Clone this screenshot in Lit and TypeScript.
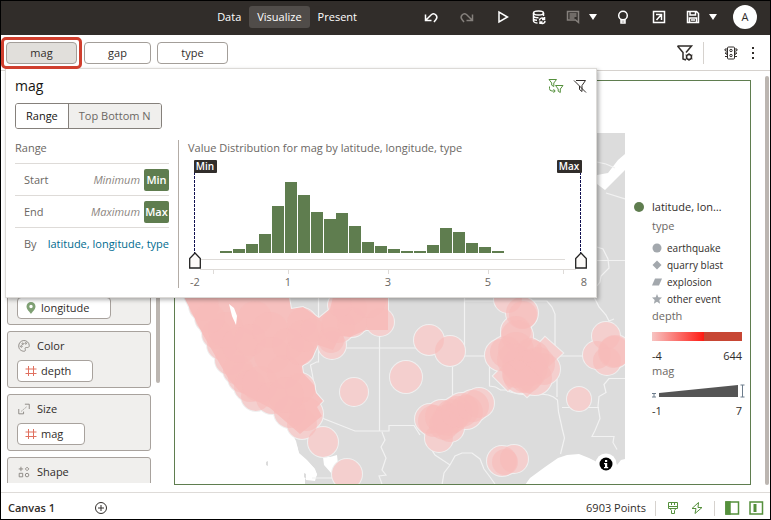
import { LitElement, html, css, svg } from "lit";
import { customElement, state } from "lit/decorators.js";

const icons = {
  undo: svg`<path d="M2.500 5.500v6h6M3 11 8.500 5.500a3.400 3.400 0 0 1 4.500 5l-2 2.500" />`,
  redo: svg`<path d="M13.500 5.500v6h-6M13 11 7.500 5.500a3.400 3.400 0 0 0-4.500 5L5 13" />`,
  play: svg`<path d="M4 3v10l8.500-5z" />`,
  db: svg`<ellipse cx="7.500" cy="4" rx="5" ry="2" /><path d="M2.500 4v8c0 1 2 2 4 2M12.500 4v3M2.500 6.800c0 1.500 3 2 5 2M2.500 9.800c0 1 2 1.500 3.500 1.500M8.500 11.500a2.500 2.500 0 0 1 4.500-1.500M13.500 8v2.500H11M14 12a2.500 2.500 0 0 1-4.500 1.500M9 15v-2h2.500" />`,
  note: svg`<path d="M2.500 2.500h11v11l-3-2.500h-8zM4.500 5h7M4.500 7h7M4.500 9h5" />`,
  bulb: svg`<circle cx="8" cy="6.500" r="4.300" /><path d="M6 10v4h4v-4M6 12h4" />`,
  exp: svg`<path d="M2.500 2.500h11v11h-11zM5 5.500h5.500V11M10.500 5.500l-5 5.500" />`,
  save: svg`<path d="M2.500 2.500h9l2 2v9h-11zM5 2.500V6h5.500V2.500M4.500 13.500V9h7v4.500M6 11h4" />`,
  light: svg`<rect x="4.500" y="2" width="7" height="12" rx="1" /><circle cx="8" cy="5.500" r="1.200" /><circle cx="8" cy="10.500" r="1.200" /><path d="M4.500 4H2v1.500l2.500 1M4.500 8H2l2.500 2M4.500 11.500H2M11.500 4H14v1.500l-2.500 1M11.500 8H14l-2.500 2M11.500 11.500H14" />`,
  swap: svg`<path d="M1 1.500h7.500L5.800 5v3.500L3.700 7.200V5zM7.500 7.500H15L12.300 11v3.500l-2.100-1.300V11zM1.500 8.500v2a2.500 2.500 0 0 0 2.500 2.500h3M5.500 11.200 7.200 13l-1.700 1.800" />`,
  nofilter: svg`<path d="M4 2.500h9.500L10 7.500v6l-2.500-2v-3.500M2 2.500l12 12" />`,
  palette: svg`<path d="M7.500 14c-2-.3-5.500-1.500-5.500-6a6 6 0 0 1 12-.5c0 2-1.500 2.500-3 2.200-2-.2-2 1-1.500 2.300S9 14.200 7.500 14z" /><circle cx="5" cy="8.500" r=".9" /><circle cx="6.500" cy="5.500" r=".9" /><circle cx="10" cy="5" r=".9" />`,
  size: svg`<path d="M9 2.500h5V8M2 8v5.500h5.500V11" /><path d="M5 10.500l6-5" stroke-dasharray="1.500 1.500" />`,
  shapes: svg`<path d="M4.500 2v5M2 4.500h5M11.500 2.500l2 2-2 2-2-2zM2.500 9.500h4v4h-4z" /><circle cx="11.500" cy="11.500" r="2" />`,
  brush: svg`<path d="M3.500 2.500h9v6h-9zM3.500 6.500h9M6.500 2.500v2.500M9.500 2.500v2.500M5 8.500l1.500 2v3h3v-3l1.500-2" />`,
  bolt: svg`<path d="M9.500 2.500 3 8.500h4L6 13.500l7-6H9z" />`,
  paneA: svg`<path d="M2 2h12.500v12H2z" /><path d="M2 2h4v12H2z" fill="currentColor" />`,
  paneB: svg`<path d="M2 2h12.500v12H2z" /><path d="M5.500 4h3v8h-3z" fill="currentColor" stroke="none" />`,
  plus: svg`<circle cx="8" cy="8" r="5.500" /><path d="M8 5v6M5 8h6" />`,
  hash: svg`<path d="M5.500 3v10M10.500 3v10M2.500 6h11M2.500 10.500h11" />`,
};
const icon = (k: keyof typeof icons, cls = "") =>
  html`<svg class="ic ${cls}" viewBox="0 0 16 16" aria-hidden="true">${icons[k]}</svg>`;

const bars = [1, 3, 8, 18, 46, 70, 57, 40, 33, 39, 26, 10, 6, 3, 1, 1, 7, 24, 20, 9, 5, 1];
const ticks = [
  [25, ""], [100, "1"], [200, "3"], [300, "5"], [375, ""],
] as const;

const quakes: number[][] = [
  [204, 306, 15], [217, 334, 15], [230, 360, 15], [222, 345, 15], [243, 378, 15], [238, 370, 15],
  [256, 396, 15], [250, 386, 16], [260, 384, 18], [272, 398, 16], [226, 330, 18], [210, 318, 15],
  [240, 345, 18], [255, 318, 17], [250, 340, 16], [270, 330, 18], [272, 355, 18], [284, 372, 17],
  [288, 344, 16], [290, 412, 16], [302, 424, 15], [306, 414, 17], [300, 388, 15], [286, 395, 18],
  [300, 351, 14], [302, 323, 15], [303, 336, 16], [312, 330, 12], [332, 345, 14], [331, 340, 13],
  [338, 326, 17], [352, 322, 15], [350, 308, 17], [380, 322, 14], [368, 300, 18], [340, 305, 12],
  [354, 392, 14], [406, 377, 16], [429, 340, 15], [450, 351, 15], [323, 442, 15], [347, 474, 15],
  [430, 419, 15], [434, 421, 16], [442, 417, 17], [439, 438, 14], [450, 428, 14], [462, 410, 17],
  [452, 416, 17], [448, 420, 16], [444, 425, 15], [457, 412, 16],
  [466, 412, 17], [473, 406, 16], [479, 403, 15], [502, 461, 15], [505, 462, 13], [514, 459, 14],
  [508, 299, 14], [522, 313, 16], [523, 315, 14], [516, 331, 15], [517, 336, 16], [501, 355, 16],
  [506, 352, 16], [516, 350, 18], [520, 365, 18], [532, 358, 18], [544, 369, 16], [526, 376, 17],
  [514, 360, 17], [530, 350, 12], [520, 376, 17], [530, 368, 18], [538, 364, 17],
  [535, 378, 17], [516, 374, 14], [606, 336, 14], [597, 355, 14], [607, 361, 14], [614, 352, 16],
  [615, 351, 16], [579, 399, 12],
];
const quarries = "M545 337l18 16-17 16-16-16zM507 362l16 15-15 14-15-15zM527 365l17 16-17 16-16-16z";
const cluster =
  "M184 297H289L291 309 303 307 319 318 330 309 333 297H388V330H366L350 337 340 336 333 350 318 345 312 358 302 366 303 373 314 385 316 393 323 401 317 407 322 416 300 434 270 408 240 392 228 378 202 333z";

@customElement("app-root")
export class AppRoot extends LitElement {
  @state() private tab = "range";

  static styles = css`
    :host { display: block; font: 11px/16px "Open Sans", "Noto Sans", sans-serif; color: #312d2a; }
    * { box-sizing: border-box; }
    button, input { font: inherit; color: inherit; margin: 0; padding: 0; border: 0; background: none; }
    a { color: #006b8f; text-decoration: none; }
    .app { position: relative; display: flex; flex-direction: column; height: 100vh; border: 1px solid #000; background: #fff; overflow: hidden; }
    .ic { width: 16px; height: 16px; fill: none; stroke: currentColor; flex: none; display: block; }
    .bold { stroke-width: 1.5; }
    .top { display: flex; align-items: center; justify-content: flex-end; height: 34px; flex: none; background: #312d2a; color: #fff; padding: 0 13px 2px 0; }
    nav { display: flex; font-weight: 500; margin-right: 56px; }
    nav button { height: 22px; padding: 0 8px; border-radius: 3px; }
    nav .on { background: #504c49; }
    .tools { display: flex; align-items: center; gap: 16px; }
    .tools button { display: flex; align-items: center; justify-content: center; width: 20px; height: 20px; }
    .tools .wide { width: 32px; justify-content: space-between; }
    .tools .dim, .dim .ic { color: #85807c; }
    .caret { width: 8px; height: 6px; fill: #fff; }
    .tools .avatar { width: 24px; height: 24px; border-radius: 50%; background: #fff; color: #312d2a; }
    .filters { display: flex; align-items: center; height: 36px; flex: none; border-bottom: 1px solid #d6d2ce; gap: 6px; padding-right: 9px; }
    .mark { border: 3px solid #d03f2e; border-radius: 5px; padding: 2px; position: relative; z-index: 3; margin-right: -4px; height: 32px; display: flex; align-items: center; }
    .pill { height: 22px; width: 67px; border: 1px solid #a39e99; border-radius: 4px; background: #fff; }
    .long { width: 71px; }
    .mark .pill { background: #e1dfdb; }
    .space { flex: 1; }
    .line { width: 1px; height: 22px; background: #d6d2ce; }
    .filters .line { margin: 0 13px 0 3px; }
    .funnel { width: 18px; height: 18px; fill: none; stroke: #312d2a; stroke-width: 1.5; display: block; }
    .body { flex: 1; min-height: 0; display: flex; padding: 0 1px 7px 6px; }
    .cards { width: 144px; flex: none; padding-top: 6px; margin-bottom: 2px; display: flex; flex-direction: column; gap: 6px; overflow: hidden; }
    .card { flex: none; border: 1px solid #a8a29d; border-radius: 3px; background: #f0efed; padding: 0 9px 5px; height: 57px; }
    .tall { height: 248px; display: flex; flex-direction: column; justify-content: flex-end; }
    .head { display: flex; align-items: center; gap: 6px; height: 28px; color: #312d2a; }
    .head .ic { color: #85807b; width: 14px; height: 14px; }
    .chip { display: flex; align-items: center; gap: 2px; height: 22px; width: fit-content; border: 1px solid #a8a29d; border-radius: 4px; background: #fff; padding: 0 21px 0 5px; }
    .chip .ic { color: #e0705f; }
    .chip .pin { fill: #7fa074; stroke: none; }
    .bar { width: 4px; border-radius: 2px; background: #bcb6b1; flex: none; }
    .inner { margin: 0 14px 102px 5px; }
    .outer { margin: 5px 0 0 14px; }
    .viz { flex: 1; min-width: 0; margin-top: 9px; border: 1px solid #5f7d4f; display: flex; }
    .map { flex: 1; min-width: 0; width: 0; height: 100%; display: block; }
    .land { fill: #dcdcdc; }
    .sea { fill: #fff; }
    .border { fill: none; stroke: #f2f2f2; stroke-width: 1.2; }
    .halo { fill: #f0f0f0; stroke: #f0f0f0; stroke-width: 2; }
    .quake { fill: #f7bcba; fill-opacity: 0.62; }
    .mass { fill: #f6c0be; }
    .legend { width: 125px; flex: none; padding: 117px 8px 0 9px; }
    .row { display: flex; align-items: center; gap: 8px; height: 17px; }
    .row svg { width: 10px; height: 10px; fill: #a3a8ad; flex: none; }
    .row .green { fill: #5f7d4f; }
    .sub { padding-left: 18px; }
    .sub .row { font-size: 10px; gap: 5px; }
    .muted { color: #6b6763; height: 17px; }
    .type { margin: 3px 0 4px; }
    .depth { margin-top: 1px; }
    .ramp { height: 9px; margin: 7px 0; background: linear-gradient(90deg, #f7c4c2, #ff1a12 58%, #c74634 58%); }
    .ends { display: flex; justify-content: space-between; height: 15px; }
    .wedge { display: block; width: 94px; height: 14px; margin: 4px 0 5px; }
    .foot { flex: none; display: flex; align-items: center; height: 27px; border-top: 1px solid #dedbd8; padding: 4px 6px 0 7px; }
    .canvas { font-weight: 600; margin-right: 38px; }
    .points { margin-right: 9px; }
    .foot .line { height: 15px; }
    .green { color: #55903c; }
    .pair { display: flex; gap: 8px; margin: 0 9px; }
    .foot .pair:last-child { margin-right: 0; }
    .popup { position: absolute; left: 4px; top: 67px; width: 592px; height: 230px; z-index: 2; background: #fff; border: 1px solid #dcdad7; box-shadow: 2px 2px 4px rgba(0, 0, 0, 0.3); padding: 7px 8px 8px 9px; }
    .ptop { display: flex; align-items: center; gap: 8px; height: 20px; }
    .ptop h2 { font-size: 14px; font-weight: 400; margin: 0; flex: 1; color: #161513; }
    .seg { display: flex; width: fit-content; margin-top: 7px; height: 26px; border: 1px solid #85807b; border-radius: 3px; overflow: hidden; }
    .seg button { padding: 0 10px; background: #f0efed; color: #6b6763; }
    .seg button + button { border-left: 1px solid #85807b; }
    .seg .on { background: #fff; color: #161513; }
    .cols { display: flex; margin-top: 11px; height: 148px; }
    .left { width: 164px; flex: none; border-right: 1px solid #b3aca6; padding-right: 9px; color: #6b6763; }
    .left h3, .right h3 { font-size: 11px; font-weight: 400; line-height: 16px; margin: 0; color: #6b6763; }
    .left h3 { height: 23px; }
    .field { display: flex; align-items: center; height: 32px; border-top: 1px solid #dedbd8; padding-left: 9px; }
    .field input { flex: 1; width: 0; min-width: 0; text-align: right; margin: 0 4px 0 8px; }
    .field input::placeholder { color: #8b8580; font-style: italic; opacity: 1; }
    .field button { width: 25px; height: 22px; border-radius: 2px; background: #5f7d4f; color: #fff; font-weight: 600; }
    .by { justify-content: space-between; white-space: nowrap; }
    .right { flex: 1; padding-left: 9px; position: relative; }
    .chart { display: block; width: 404px; height: 136px; font-size: 11px; fill: #6b6763; }
    .hbar { fill: #5f7d4f; }
    .axis { stroke: #dedbd8; fill: none; }
    .guide { stroke: #101050; stroke-dasharray: 3 1; }
    .tag { fill: #312d2a; }
    .tagtext { fill: #fff; font-weight: 600; font-size: 10px; }
    .mid { text-anchor: middle; }
    .slide { position: absolute; left: 10px; top: 112px; width: 398px; height: 17px; appearance: none; pointer-events: none; }
    .slide::-webkit-slider-thumb { appearance: none; pointer-events: auto; width: 12px; height: 17px; background: url("data:image/svg+xml,%3Csvg xmlns='http://www.w3.org/2000/svg' viewBox='0 0 12 17'%3E%3Cpath d='M.7 16V6.500L6 1l5.300 5.500V16z' fill='%23fcfaf8' stroke='%23222' stroke-width='1.300'/%3E%3C/svg%3E"); }
  `;

  private map() {
    return html`<svg class="map" viewBox="175 81 450 404" preserveAspectRatio="xMinYMin slice" role="img" aria-label="Map">
      <path class="land" d="M175 133H625V485H304L303 474 305 473 306 480 315 481 317 474 314 468 307 461 299 454 297 446 292 438 290 428 240 385 183 297H175z" />
      <path class="sea" d="M175 297h10l20 40 50 70 35 22 6 12 3 12 8 7 8 9 2 6-3 4h-9v5H175zM323 457l7 0 7-2 1 9 0 7-6 3-8-9zM525 485l5-7 15-11 13-9 9-3 12-1 10 4 10 5 10 2 5-5 3 5 4-5 4-1v26zM597 175l11-2 10-13 7-6v16l-10 10-10 10-8-6z" />
      <path class="land" d="M266 462l2-1v5l-2-1zM304 473l2 1v5l-2-2z" />
      <path class="border" d="M318.500 297v65h-2l-6 3 2 10 2 14M340 348H464M379.500 336V431H389V425.500H414L420 435M322 418l33 13h24M312 478h20M464.500 297v59H490M464 301h83l5 6 3 7v42M560 356h24M489.500 356v30l6 1 5 3 5 0 5 2 8 2 9 1 13-1 8 1 5 2 4 3 1 12 4 18 2 8-3 12-1 4M557 356v41M562 407.500h37M452.500 367v30M382 432l3 8-4 7 5 11-4 12 4 5-7 1 3 8M430 447l5 8 15 10 5-9 7-3h10l8 6 4 10 6 8 5 7M450 465l-6 8-2 12M625 378.500h-16l-5 6 2 8-7 4-1 10 2 12-5 12-3 6h22l-1 6 4 7M594 297l5 10 7 8 3 6 5-2M597 162l9 2 9 4M606 193l19 6M597 260.500h28M597 247l6 2 5 10 1 9-8 8-1 6-3 4" />
      <path class="halo" d=${cluster} />
      <path class="halo" d=${quarries} />
      ${quakes.map(([x, y, r]) => svg`<circle class="halo" cx=${x} cy=${y} r=${r} />`)}
      <path class="mass" d=${cluster} />
      ${quakes.map(([x, y, r]) => svg`<circle class="quake" cx=${x} cy=${y} r=${r} />`)}
      <path class="quake" d=${quarries} />
      <path class="sea" d="M229 304l5 4 3 8-1 9-4-9z" />
      <circle class="sea" cx="606" cy="464" r="10.500" />
      <circle cx="606" cy="464" r="6.500" />
      <path class="sea" d="M605 460h2.200v2H605zM604 463h3.200v4h1v1.200H604V467h1v-2.800h-1z" />
    </svg>`;
  }

  private chart() {
    return html`<svg class="chart" viewBox="0 0 404 136" role="img" aria-label="Value distribution">
      ${bars.map((h, i) => svg`<rect class="hbar" x=${32 + Math.round(i * 12.94)} y=${96 - h} width="12" height=${h + 1} />`)}
      <path class="axis" d="M12 103.500H377M12 113.500H388" />
      ${ticks.map(([x, t]) => svg`<path class="axis" d="M${x}.500 114v4" />${t ? svg`<text class="mid" x=${x} y="130">${t}</text>` : ""}`)}
      <text x="2" y="130">-2</text><text class="mid" x="396" y="130">8</text>
      <path class="guide" d="M6.500 16V100M392.500 16V100" />
      <rect class="tag" x="6" y="4" width="23" height="13" rx="1" />
      <rect class="tag" x="369" y="4" width="25" height="13" rx="1" />
      <text class="tagtext mid" x="17" y="14">Min</text><text class="tagtext mid" x="381" y="14">Max</text>
    </svg>`;
  }

  private caret() {
    return html`<svg class="caret" viewBox="0 0 8 6"><path d="M0 0h8L4 6z" /></svg>`;
  }

  render() {
    return html`<div class="app">
      <header class="top">
        <nav><button>Data</button><button class="on">Visualize</button><button>Present</button></nav>
        <div class="tools">
          <button aria-label="Undo">${icon("undo", "bold")}</button>
          <button class="dim" aria-label="Redo">${icon("redo", "bold")}</button>
          <button aria-label="Preview">${icon("play", "bold")}</button>
          <button aria-label="Refresh data">${icon("db", "bold")}</button>
          <button class="wide dim" aria-label="Notes">${icon("note", "bold")}${this.caret()}</button>
          <button aria-label="Insights">${icon("bulb", "bold")}</button>
          <button aria-label="Export">${icon("exp", "bold")}</button>
          <button class="wide" aria-label="Save">${icon("save", "bold")}${this.caret()}</button>
          <button class="avatar" aria-label="Account A">A</button>
        </div>
      </header>
      <div class="filters">
        <div class="mark"><button class="pill long">mag</button></div>
        <button class="pill">gap</button>
        <button class="pill long">type</button>
        <span class="space"></span>
        <button aria-label="Filter settings"><svg class="funnel" viewBox="0 0 18 18"><path d="M1.500 2h14L10 8.500M1.500 2 7 8.500V15l3 1" /><circle cx="13" cy="13" r="2.500" /><path d="M13 9v1.500M13 15.500V17M9.500 11l1.500 1M15 14l1.500 1M9.500 15l1.500-1M15 12l1.500-1" stroke-width="1" /></svg></button>
        <span class="line"></span>
        <button aria-label="Data actions">${icon("light")}</button>
        <button aria-label="More"><svg class="ic" viewBox="0 0 16 16"><path d="M7 2h2v2H7zM7 7h2v2H7zM7 12h2v2H7z" fill="currentColor" stroke="none" /></svg></button>
      </div>
      <section class="popup">
        <div class="ptop"><h2>mag</h2>
          <button class="green" aria-label="Limit values">${icon("swap")}</button>
          <button aria-label="Disable filter">${icon("nofilter")}</button>
        </div>
        <div class="seg">
          <button class=${this.tab === "range" ? "on" : ""} @click=${() => (this.tab = "range")}>Range</button>
          <button class=${this.tab === "top" ? "on" : ""} @click=${() => (this.tab = "top")}>Top Bottom N</button>
        </div>
        <div class="cols">
          <div class="left"><h3>Range</h3>
            <div class="field"><label for="start">Start</label><input id="start" placeholder="Minimum" /><button>Min</button></div>
            <div class="field"><label for="end">End</label><input id="end" placeholder="Maximum" /><button>Max</button></div>
            <div class="field by"><span>By</span><a href="#by">latitude, longitude, type</a></div>
          </div>
          <div class="right"><h3>Value Distribution for mag by latitude, longitude, type</h3>
            ${this.chart()}
            <input class="slide" type="range" min="-2" max="8" value="-2" aria-label="Minimum" />
            <input class="slide" type="range" min="-2" max="8" value="8" aria-label="Maximum" />
          </div>
        </div>
      </section>
      <main class="body">
        <div class="cards">
          <div class="card tall"><div class="chip"><svg class="ic pin" viewBox="0 0 16 16"><path fill-rule="evenodd" d="M8 2a4.500 4.500 0 0 1 4.500 4.500C12.500 9.500 9 12 8 14 7 12 3.500 9.500 3.500 6.500A4.500 4.500 0 0 1 8 2zM8 4.800a1.700 1.700 0 1 0 0 3.400 1.700 1.700 0 0 0 0-3.400z" /></svg>longitude</div></div>
          <div class="card"><div class="head">${icon("palette")}Color</div><div class="chip">${icon("hash")}depth</div></div>
          <div class="card"><div class="head">${icon("size")}Size</div><div class="chip">${icon("hash")}mag</div></div>
          <div class="card"><div class="head">${icon("shapes")}Shape</div></div>
        </div>
        <div class="bar inner"></div>
        <div class="viz">
          ${this.map()}
          <div class="legend">
            <div class="row"><svg class="green" viewBox="0 0 10 10"><circle cx="5" cy="5" r="5" /></svg>latitude, lon…</div>
            <div class="sub">
              <div class="muted type">type</div>
              <div class="row"><svg viewBox="0 0 10 10"><circle cx="5" cy="5" r="4.500" /></svg>earthquake</div>
              <div class="row"><svg viewBox="0 0 10 10"><path d="M5 .5 9.500 5 5 9.500.5 5z" /></svg>quarry blast</div>
              <div class="row"><svg viewBox="0 0 10 10"><path d="M3 1.500h7L7 8.500H0z" /></svg>explosion</div>
              <div class="row"><svg viewBox="0 0 10 10"><path d="M5 0l1.300 3.300L10 3.600 7.300 6l.8 3.700L5 7.800 1.900 9.700 2.700 6 0 3.600l3.700-.3z" /></svg>other event</div>
              <div class="muted depth">depth</div>
              <div class="ramp"></div>
              <div class="ends"><span>-4</span><span>644</span></div>
              <div class="muted">mag</div>
              <svg class="wedge" viewBox="0 0 94 14"><path d="M7 9 86 1V13H7z" fill="#555" /><path d="M0 9.500h4M2 9v4M0 13h4M88.500 1h4M90.500 1v12M88.500 13h4" stroke="#6c7c8c" fill="none" /></svg>
              <div class="ends"><span>-1</span><span>7</span></div>
            </div>
          </div>
        </div>
        <div class="bar outer"></div>
      </main>
      <footer class="foot">
        <span class="canvas">Canvas 1</span>
        <button aria-label="Add canvas">${icon("plus")}</button>
        <span class="space"></span>
        <span class="points">6903 Points</span><span class="line"></span>
        <div class="pair green"><button aria-label="Brushing">${icon("brush")}</button><button aria-label="Auto apply">${icon("bolt")}</button></div>
        <span class="line"></span>
        <div class="pair green"><button aria-label="Show grammar panel">${icon("paneA", "bold")}</button><button aria-label="Show data panel">${icon("paneB", "bold")}</button></div>
      </footer>
    </div>`;
  }
}
